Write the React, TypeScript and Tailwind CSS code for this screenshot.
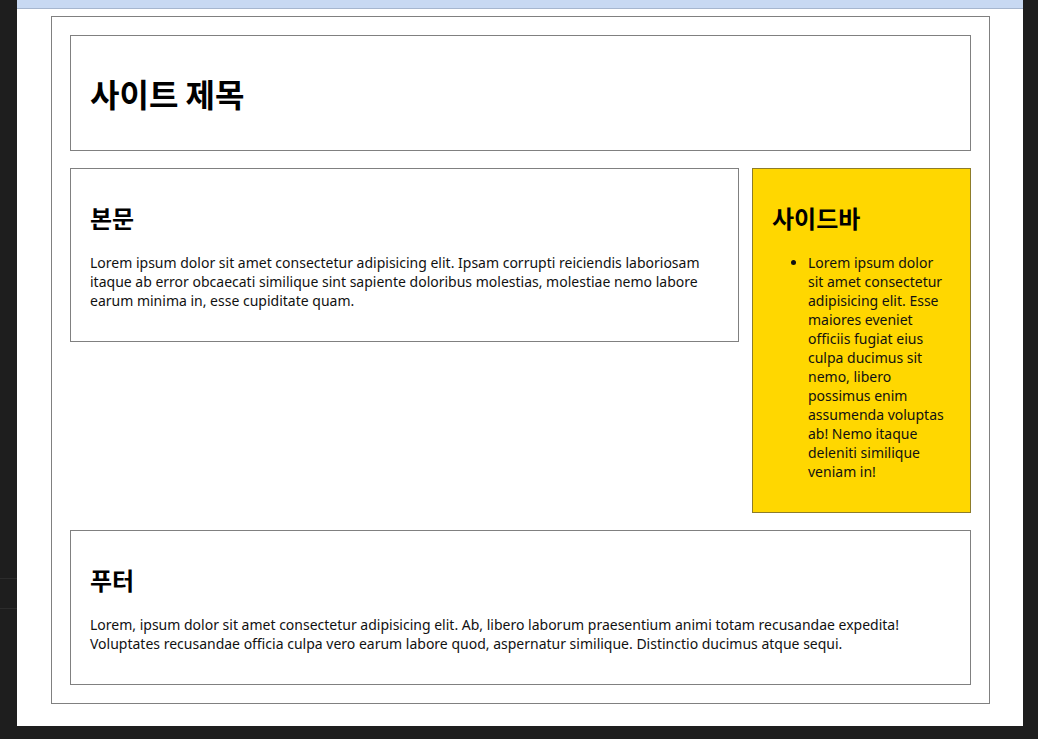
import React from "react";

const latin = { fontFamily: '"Noto Sans", "Noto Sans CJK KR", sans-serif' } as React.CSSProperties;

export default function App() {
  return (
    <div className="w-[1038px] h-[739px] bg-[#1e1e1e] flex overflow-hidden" style={{ fontFamily: '"Noto Sans CJK KR", "Noto Sans", sans-serif' }}>
      <div className="w-[17px] shrink-0 flex flex-col">
        <div className="h-[578px]" />
        <div className="h-px bg-[#2c2c2c]" />
        <div className="h-[29px]" />
        <div className="h-px bg-[#2c2c2c]" />
      </div>
      <div className="w-[1006px] h-[726px] bg-white shrink-0 flex flex-col">
        <div className="h-[9px] bg-[#c8d9f2] border-b border-[#a6b6ce]" />
        <div className="ml-[34px] mt-[7px] w-[939px] h-[688px] border border-[#808080] p-[18px] flex flex-col gap-[17px]">
          <header className="h-[116px] border border-[#808080] flex items-center pl-[19px]">
            <h1 className="text-[32px] leading-[40px] font-bold text-black">사이트 제목</h1>
          </header>
          <div className="flex gap-[13px] items-start">
            <main className="w-[669px] h-[174px] border border-[#808080] px-[19px] pt-[33px]">
              <h2 className="text-[24px] leading-[32px] font-bold text-black">본문</h2>
              <p className="mt-[19px] text-[14px] leading-[19px] text-[#111]" style={latin}>
                Lorem ipsum dolor sit amet consectetur adipisicing elit. Ipsam corrupti reiciendis laboriosam itaque ab error obcaecati similique sint sapiente doloribus molestias, molestiae nemo labore earum minima in, esse cupiditate quam.
              </p>
            </main>
            <aside className="w-[219px] h-[345px] border border-[#8d7c2a] bg-[#ffd700] px-[19px] pt-[33px]">
              <h2 className="text-[24px] leading-[32px] font-bold text-black">사이드바</h2>
              <ul className="mt-[19px] pl-[36px] list-disc text-[14px] leading-[19px] text-[#111]" style={latin}>
                <li>
                  Lorem ipsum dolor sit amet consectetur adipisicing elit. Esse maiores eveniet officiis fugiat eius culpa ducimus sit nemo, libero possimus enim assumenda voluptas ab! Nemo itaque deleniti similique veniam in!
                </li>
              </ul>
            </aside>
          </div>
          <footer className="h-[155px] border border-[#808080] px-[19px] pt-[33px]">
            <h2 className="text-[24px] leading-[32px] font-bold text-black">푸터</h2>
            <p className="mt-[19px] text-[14px] leading-[19px] text-[#111]" style={latin}>
              Lorem, ipsum dolor sit amet consectetur adipisicing elit. Ab, libero laborum praesentium animi totam recusandae expedita! Voluptates recusandae officia culpa vero earum labore quod, aspernatur similique. Distinctio ducimus atque sequi.
            </p>
          </footer>
        </div>
      </div>
    </div>
  );
}
